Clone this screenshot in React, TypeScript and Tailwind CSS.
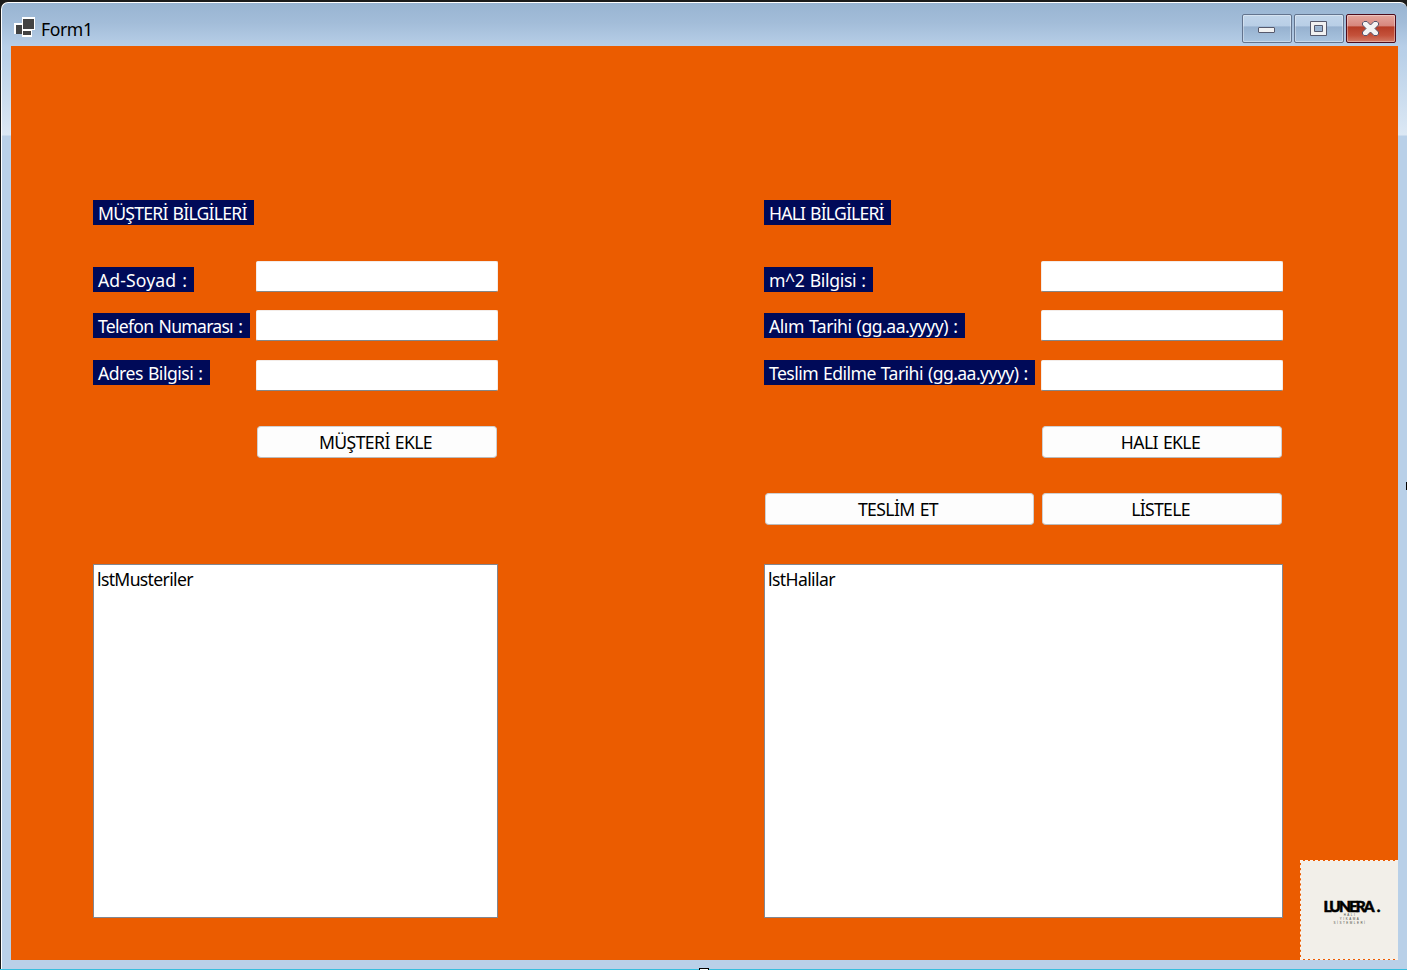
import React from "react";

type FieldProps = {
  label: string;
  labelClass: string;
  rowClass: string;
  labelOffset: string;
  gridClass: string;
};

const tag =
  "h-[25px] pl-[5px] pt-px text-[17.6px] leading-[25px] whitespace-nowrap bg-[#000a58] text-white";

function Field({ label, labelClass, rowClass, labelOffset, gridClass }: FieldProps) {
  return (
    <label className={`grid items-start ${gridClass} ${rowClass}`}>
      <span className={`${tag} ${labelClass} ${labelOffset}`}>{label}</span>
      <input
        type="text"
        className="h-[31px] w-[242px] rounded-[2px] border border-b-[#868686] border-l-[#f3ece8] border-r-[#f3ece8] border-t-[#f3ece8] bg-white px-1 text-[17.6px] outline-none"
      />
    </label>
  );
}

function Button({ children, className }: { children: React.ReactNode; className: string }) {
  return (
    <button
      className={`h-[32px] rounded-[4px] border border-[#d0d0d0] border-b-[#bbbbbb] bg-[#fdfdfd] pr-[3px] text-center text-[17.6px] leading-[30px] whitespace-nowrap text-black ${className}`}
    >
      {children}
    </button>
  );
}

function FormIcon() {
  return (
    <svg width="22" height="21" viewBox="0 0 22 21" shapeRendering="crispEdges">
      <path d="M8 0h13v13h-3v7H8v-3H0V6h8z" fill="#fff" />
      <path d="M2 8h6v9H2zM9 2h11v10H9zM9 14h8v4H9z" fill="#424242" />
    </svg>
  );
}

const captionBase =
  "h-[29px] w-[50px] rounded-[2px] border shadow-[inset_0_0_0_1px_rgba(255,255,255,0.35)]";

const captionBlue =
  "border-[#63748e] bg-[linear-gradient(#c1d5ea_0%,#b8cee6_42%,#96b1cf_43%,#a9c4df_100%)]";

function TitleBar() {
  return (
    <header className="flex h-[43px] items-start pl-[12px] pr-[11px]">
      <div className="pt-[14px]">
        <FormIcon />
      </div>
      <h1 className="ml-[5px] pt-[14px] text-[17.6px] leading-[25px] tracking-[-0.4px] text-black">Form1</h1>
      <div className="ml-auto flex gap-[2px] pt-[11px]">
        <button aria-label="Minimize" className={`${captionBase} ${captionBlue}`}>
          <svg width="48" height="27" viewBox="0 0 48 27" className="block">
            <rect x="15.500" y="12.500" width="16" height="5" rx="0.5" fill="#f1f1f1" stroke="#56596c" />
          </svg>
        </button>
        <button aria-label="Maximize" className={`${captionBase} ${captionBlue}`}>
          <svg width="48" height="27" viewBox="0 0 48 27" className="block">
            <path
              d="M15.500 6.500h16v14h-16zM19.500 10.500v6h8v-6z"
              fill="#f1f1f1"
              fillRule="evenodd"
              stroke="#56596c"
              strokeLinejoin="round"
            />
          </svg>
        </button>
        <button
          aria-label="Close"
          className={`${captionBase} border-[#4c0b1c] bg-[linear-gradient(#e5a79f_0%,#d6857b_42%,#b53c26_43%,#c4513a_75%,#d27b66_100%)]`}
        >
          <svg width="48" height="27" viewBox="0 0 48 27" className="block">
            <path
              d="M17 6.500h3l3.500 3.500 3.500-3.500h3l1.500 1.500v2l-3.500 3.500 3.500 3.500v2l-1.500 1.500h-3l-3.500-3.500-3.500 3.500h-3l-1.500-1.500v-2l3.500-3.500-3.500-3.500v-2z"
              fill="#f3f3f3"
              stroke="#56546a"
              strokeLinejoin="round"
            />
          </svg>
        </button>
      </div>
    </header>
  );
}

function Logo() {
  return (
    <div className="absolute bottom-0 right-0 flex h-[100px] w-[98px] flex-col items-center border border-r-0 border-dashed border-[#fff1e6] bg-[#f2efe9] bg-clip-padding pt-[35px] font-['Liberation_Sans',sans-serif] text-black">
      <div className="ml-[3px] h-[17px] font-['Lato','Inter',sans-serif] text-[15.5px] leading-[20px] font-black tracking-[-2px] whitespace-nowrap [-webkit-text-stroke:0.5px_black]">
        LUNERA<span className="ml-[4px]">.</span>
      </div>
      <div className="ml-px text-center text-[3px] leading-[4px] tracking-[1.5px] text-[#4b4945]">
        <p>HALI</p>
        <p>YIKAMA</p>
        <p>SİSTEMLERİ</p>
      </div>
    </div>
  );
}

function ListBox({ item, className }: { item: string; className: string }) {
  return (
    <div
      className={`h-[354px] border border-[#828790] bg-white pl-[3px] pt-[2px] text-[17.6px] leading-[25px] text-black ${className}`}
    >
      {item}
    </div>
  );
}

export default function App() {
  return (
    <div className="relative h-[970px] w-[1407px] overflow-hidden bg-[#1b1b1b] pl-px pt-[2px] font-['Noto_Sans','Open_Sans',sans-serif]">
      <div className="h-[967px] w-[1406px] rounded-t-[7px] border-l border-t border-white bg-[linear-gradient(#98b4d2_0px,#a3bdd9_20px,#b8cfe8_44px,#b9d0e8_52px,#dce8f4_132px,#b9d0e8_133px,#b9d0e8_100%)]">
        <TitleBar />
        <main className="relative ml-[9px] flex h-[914px] w-[1387px] bg-[#eb5c00] pl-[82px] pt-[154px]">
          <section className="w-[671px]">
            <h2 className={`${tag} w-[161px] tracking-[-0.75px] [word-spacing:1px]`}>MÜŞTERİ BİLGİLERİ</h2>
            <Field label="Ad-Soyad :" labelClass="w-[101px] tracking-[0.1px] [word-spacing:1.5px]" labelOffset="mt-[6px]" gridClass="grid-cols-[163px_242px]" rowClass="mt-[36px] h-[49px]" />
            <Field label="Telefon Numarası :" labelClass="w-[157px] tracking-[-0.75px] [word-spacing:1.5px]" labelOffset="mt-[3px]" gridClass="grid-cols-[163px_242px]" rowClass="h-[50px]" />
            <Field label="Adres Bilgisi :" labelClass="w-[117px] tracking-[-0.5px] [word-spacing:1px]" labelOffset="" gridClass="grid-cols-[163px_242px]" rowClass="h-[66px]" />
            <Button className="ml-[164px] w-[240px] tracking-[-0.6px] [word-spacing:1px]">MÜŞTERİ EKLE</Button>
            <ListBox item="lstMusteriler" className="mt-[106px] w-[405px] tracking-[-0.66px]" />
          </section>
          <section className="w-[519px]">
            <h2 className={`${tag} w-[127px] tracking-[-0.8px] [word-spacing:1px]`}>HALI BİLGİLERİ</h2>
            <Field label="m^2 Bilgisi :" labelClass="w-[109px] tracking-[-0.35px] [word-spacing:1px]" labelOffset="mt-[6px]" gridClass="grid-cols-[277px_242px]" rowClass="mt-[36px] h-[49px]" />
            <Field label="Alım Tarihi (gg.aa.yyyy) :" labelClass="w-[201px] tracking-[-0.48px] [word-spacing:1px]" labelOffset="mt-[3px]" gridClass="grid-cols-[277px_242px]" rowClass="h-[50px]" />
            <Field label="Teslim Edilme Tarihi (gg.aa.yyyy) :" labelClass="w-[271px] tracking-[-0.56px] [word-spacing:1px]" labelOffset="" gridClass="grid-cols-[277px_242px]" rowClass="h-[66px]" />
            <Button className="ml-[278px] w-[240px] tracking-[-0.6px] [word-spacing:1px]">HALI EKLE</Button>
            <div className="mt-[35px] flex gap-[8px] pl-px">
              <Button className="w-[269px] tracking-[-0.6px] [word-spacing:1px]">TESLİM ET</Button>
              <Button className="w-[240px] tracking-[-0.7px]">LİSTELE</Button>
            </div>
            <ListBox item="lstHalilar" className="mt-[39px] w-[519px] tracking-[-0.62px]" />
          </section>
          <Logo />
        </main>
      </div>
      <div className="-ml-px h-px w-[1407px] bg-[#36bede]" />
      <div className="absolute left-[699px] top-[968px] h-[2px] w-[10px] border border-b-0 border-black bg-white" />
      <div className="absolute right-0 top-[482px] h-[8px] w-[1px] bg-black" />
    </div>
  );
}
